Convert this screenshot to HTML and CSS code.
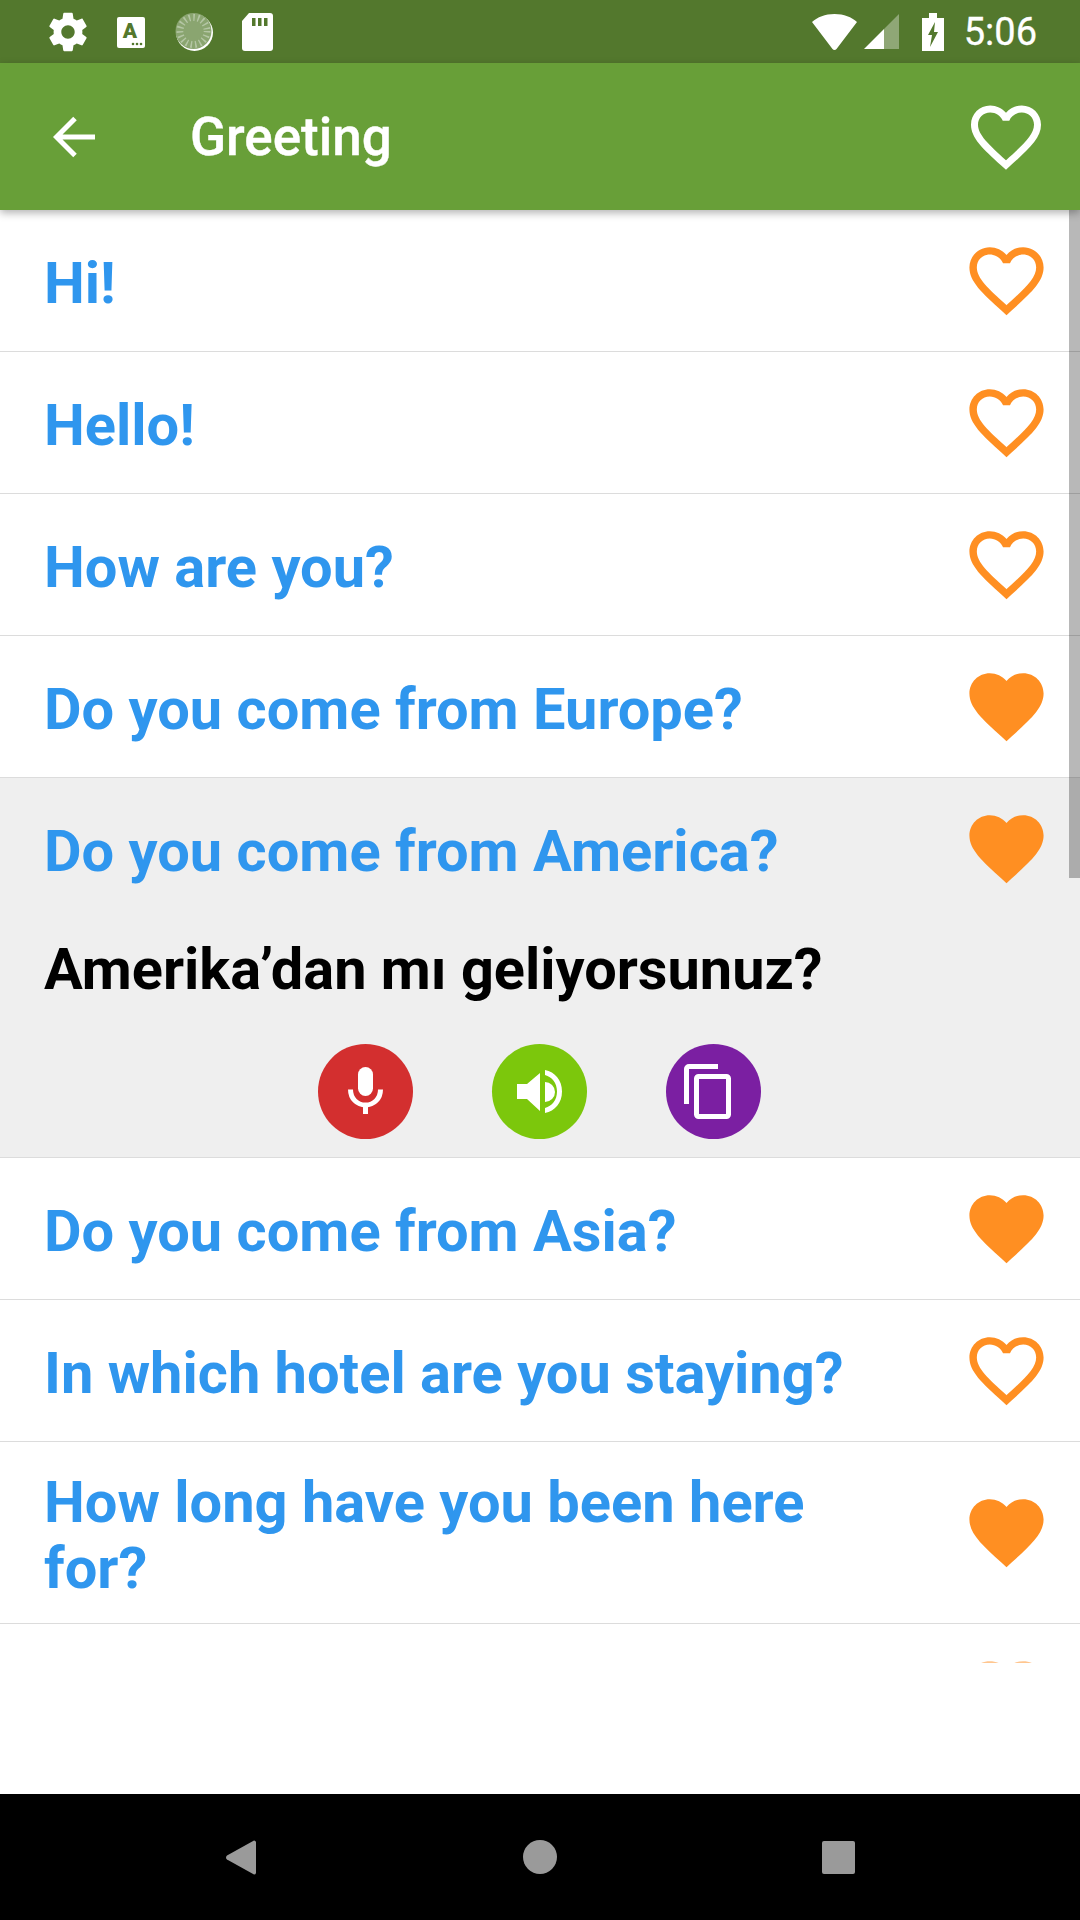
FILE: index.html
```html
<!DOCTYPE html>
<html lang="en">
<head>
    <meta charset="UTF-8">
    <meta name="viewport" content="width=device-width, initial-scale=1.0">
    <title>Greeting</title>
    <link rel="stylesheet" href="styles.css">
</head>
<body>
    <svg class="icon-defs" width="0" height="0">
        <defs>
            <path id="heart-fill" d="M12 21.35l-1.45-1.32C5.4 15.36 2 12.28 2 8.5 2 5.42 4.42 3 7.5 3c1.74 0 3.41.81 4.5 2.09C13.09 3.81 14.76 3 16.5 3 19.58 3 22 5.42 22 8.5c0 3.78-3.4 6.86-8.55 11.54L12 21.35z"/>
            <path id="heart-line" d="M16.5 3c-1.74 0-3.41.81-4.5 2.09C10.91 3.81 9.24 3 7.5 3 4.42 3 2 5.42 2 8.5c0 3.78 3.4 6.86 8.55 11.54L12 21.35l1.45-1.32C18.6 15.36 22 12.28 22 8.5 22 5.42 19.58 3 16.5 3zm-4.4 15.55l-.1.1-.1-.1C7.14 14.24 4 11.39 4 8.5 4 6.5 5.5 5 7.5 5c1.54 0 3.04.99 3.57 2.36h1.87C13.46 5.99 14.96 5 16.5 5c2 0 3.5 1.5 3.5 3.5 0 2.89-3.14 5.74-7.9 10.05z"/>
        </defs>
    </svg>

    <div class="status-bar">
        <div class="status-left">
            <svg class="status-icon" viewBox="0 0 24 24"><path fill="#fff" d="M19.43 12.98c.04-.32.07-.64.07-.98s-.03-.66-.07-.98l2.11-1.65c.19-.15.24-.42.12-.64l-2-3.46c-.12-.22-.39-.3-.61-.22l-2.49 1c-.52-.4-1.08-.73-1.69-.98l-.38-2.65C14.46 2.18 14.25 2 14 2h-4c-.25 0-.46.18-.49.42l-.38 2.65c-.61.25-1.17.59-1.69.98l-2.49-1c-.23-.09-.49 0-.61.22l-2 3.46c-.13.22-.07.49.12.64l2.11 1.65c-.04.32-.07.65-.07.98s.03.66.07.98l-2.11 1.65c-.19.15-.24.42-.12.64l2 3.46c.12.22.39.3.61.22l2.49-1c.52.4 1.08.73 1.69.98l.38 2.65c.03.24.24.42.49.42h4c.25 0 .46-.18.49-.42l.38-2.65c.61-.25 1.17-.59 1.69-.98l2.49 1c.23.09.49 0 .61-.22l2-3.46c.12-.22.07-.49-.12-.64l-2.11-1.65zM12 15.5c-1.93 0-3.5-1.57-3.5-3.5s1.57-3.5 3.5-3.5 3.5 1.57 3.5 3.5-1.57 3.5-3.5 3.5z"/></svg>
            <svg class="status-icon" viewBox="0 0 46 46">
                <rect x="9" y="8" width="28" height="31" rx="2" fill="#fff"/>
                <text x="22" y="29" class="a-glyph">A</text>
                <circle cx="25" cy="35" r="1.3" fill="#53782d"/><circle cx="29" cy="35" r="1.3" fill="#53782d"/><circle cx="33" cy="35" r="1.3" fill="#53782d"/>
            </svg>
            <svg class="status-icon" viewBox="0 0 46 46">
                <circle cx="23.500" cy="23.500" r="18.500" fill="#fff"/>
                <circle cx="22.500" cy="22" r="18" fill="#8aa570"/>
                <circle cx="22.500" cy="22" r="13.500" fill="none" stroke="#b4c6a4" stroke-width="7" stroke-dasharray="1.500 3"/>
                <circle cx="22.500" cy="22" r="10" fill="#8aa570"/>
            </svg>
            <svg class="status-icon" viewBox="0 0 46 46">
                <path fill="#fff" d="M15 4h21a3 3 0 0 1 3 3v32a3 3 0 0 1-3 3H11a3 3 0 0 1-3-3V12z"/>
                <path fill="#53782d" d="M18 9h3.500v8H18zM24 9h3.500v8H24zM30 9h3.500v8H30z"/>
            </svg>
        </div>
        <div class="status-right">
            <svg class="wifi" viewBox="0 0 45 36"><path fill="#fff" d="M22.500 0C13 0 5.500 3 0 8l20.500 27a2.500 2.500 0 0 0 4 0L45 8C39.500 3 32 0 22.500 0z"/></svg>
            <svg class="signal" viewBox="0 0 35 35">
                <path fill="#fff" d="M0 35L20 15V35z"/>
                <path fill="#fff" fill-opacity=".35" d="M20 15L35 0V35H20z"/>
            </svg>
            <svg class="battery" viewBox="0 0 22 38">
                <path fill="#fff" d="M7 0h8v5h7v33H0V5h7z"/>
                <path fill="#53782d" d="M13 9L6 22h4l-2 12 8-15h-4z"/>
            </svg>
            <span class="clock">5:06</span>
        </div>
    </div>

    <header class="toolbar">
        <svg class="back-arrow" viewBox="0 0 42 42"><path fill="none" stroke="#fff" stroke-width="5" d="M42 21H4M22 2.500L3.500 21 22 39.500"/></svg>
        <h1 class="toolbar-title">Greeting</h1>
        <svg class="toolbar-heart" viewBox="0 0 24 24"><use href="#heart-line" fill="#fff"/></svg>
    </header>

    <main class="list">
        <div class="scrollbar"></div>

        <div class="row">
            <div class="phrase">Hi!</div>
            <svg class="heart" viewBox="0 0 24 24"><use href="#heart-line"/></svg>
        </div>
        <div class="row">
            <div class="phrase">Hello!</div>
            <svg class="heart" viewBox="0 0 24 24"><use href="#heart-line"/></svg>
        </div>
        <div class="row">
            <div class="phrase">How are you?</div>
            <svg class="heart" viewBox="0 0 24 24"><use href="#heart-line"/></svg>
        </div>
        <div class="row">
            <div class="phrase">Do you come from Europe?</div>
            <svg class="heart" viewBox="0 0 24 24"><use href="#heart-fill"/></svg>
        </div>

        <div class="expanded">
            <div class="expanded-head">
                <div class="phrase">Do you come from America?</div>
                <svg class="heart" viewBox="0 0 24 24"><use href="#heart-fill"/></svg>
            </div>
            <div class="translation">Amerika’dan mı geliyorsunuz?</div>
            <div class="actions">
                <svg class="action action-mic" viewBox="0 0 95 95">
                    <rect x="40" y="23" width="15" height="29" rx="7.500" fill="#fff"/>
                    <path fill="none" stroke="#fff" stroke-width="5" d="M32.500 45.500c0 9 6.500 15.500 15 15.500s15-6.500 15-15.500"/>
                    <rect x="45" y="60" width="5" height="10" fill="#fff"/>
                </svg>
                <svg class="action action-speaker" viewBox="0 0 95 95">
                    <path fill="#fff" d="M25 40h10l13-11v38L35 55H25z"/>
                    <path fill="#fff" d="M53 38a10 10 0 0 1 0 20z"/>
                    <path fill="#fff" d="M53 26c10 2 17 10 17 21.500S63 67 53 69v-5c7-2 12-8 12-16.500S60 33 53 31z"/>
                </svg>
                <svg class="action action-copy" viewBox="0 0 95 95">
                    <path fill="none" stroke="#fff" stroke-width="5" d="M20.500 60V25a2.500 2.500 0 0 1 2.500-2.500h29"/>
                    <rect x="30.500" y="32.500" width="32" height="40" rx="2" fill="none" stroke="#fff" stroke-width="5"/>
                </svg>
            </div>
        </div>

        <div class="row">
            <div class="phrase">Do you come from Asia?</div>
            <svg class="heart" viewBox="0 0 24 24"><use href="#heart-fill"/></svg>
        </div>
        <div class="row">
            <div class="phrase">In which hotel are you staying?</div>
            <svg class="heart" viewBox="0 0 24 24"><use href="#heart-line"/></svg>
        </div>
        <div class="row row-tall">
            <div class="phrase">How long have you been here for?</div>
            <svg class="heart" viewBox="0 0 24 24"><use href="#heart-fill"/></svg>
        </div>
        <div class="row row-cut">
            <svg class="heart" viewBox="0 0 24 24"><use href="#heart-line"/></svg>
        </div>
    </main>

    <div class="list-rest"></div>

    <nav class="nav-bar">
        <svg class="nav-back" viewBox="0 0 30 35"><path fill="#9a9a9a" d="M28 0.500a2 2 0 0 1 2 1.500v31a2 2 0 0 1-2 1.500L1 19.500a2.500 2.500 0 0 1 0-4z"/></svg>
        <div class="nav-home"></div>
        <div class="nav-recent"></div>
    </nav>
</body>
</html>
```

FILE: styles.css
```css
* {
    box-sizing: border-box;
}
html, body {
    margin: 0;
    padding: 0;
}
body {
    width: 1080px;
    height: 1920px;
    display: flex;
    flex-direction: column;
    font-family: Roboto, "Noto Sans", sans-serif;
    background-color: #fff;
    overflow: hidden;
}
.icon-defs {
    position: absolute;
}

.status-bar {
    height: 63px;
    flex: none;
    display: flex;
    justify-content: space-between;
    align-items: center;
    background-color: #53782d;
    color: #fff;
}
.status-left {
    display: flex;
    gap: 17px;
    padding-left: 45px;
}
.status-icon {
    width: 46px;
    height: 46px;
    display: block;
}
.a-glyph {
    font-family: Roboto, sans-serif;
    font-weight: 900;
    font-size: 21px;
    text-anchor: middle;
    fill: #53782d;
}
.status-right {
    display: flex;
    align-items: center;
    padding-right: 43px;
}
.wifi {
    width: 45px;
    height: 36px;
    margin-right: 7px;
}
.signal {
    width: 35px;
    height: 35px;
    margin-right: 23px;
}
.battery {
    width: 22px;
    height: 38px;
    margin-right: 20px;
}
.clock {
    font-size: 38px;
    line-height: 68px;
    -webkit-text-stroke: 0.3px #fff;
}

.toolbar {
    height: 147px;
    flex: none;
    display: flex;
    align-items: center;
    padding: 0 32px 0 53px;
    background-color: #689f38;
    box-shadow: 0 3px 8px rgba(0, 0, 0, 0.3);
    position: relative;
    z-index: 2;
}
.back-arrow {
    width: 42px;
    height: 42px;
    margin-right: 95px;
}
.toolbar-title {
    margin: 0;
    flex: 1;
    font-size: 53px;
    font-weight: 500;
    line-height: 152px;
    -webkit-text-stroke: 0.4px #fff;
    color: #fff;
}
.toolbar-heart {
    width: 84px;
    height: 84px;
}

.list {
    height: 1453px;
    flex: none;
    overflow: hidden;
    position: relative;
}
.scrollbar {
    position: absolute;
    top: 0;
    right: 0;
    width: 11px;
    height: 668px;
    background-color: rgba(0, 0, 0, 0.28);
    z-index: 1;
}
.row, .expanded-head {
    height: 142px;
    display: flex;
    align-items: center;
    justify-content: space-between;
    padding: 0 29px 0 44px;
}
.row {
    border-bottom: 1px solid #dcdcdc;
}
.expanded-head {
    padding-bottom: 1px;
}
.row-tall {
    height: 182px;
}
.phrase {
    max-width: 820px;
    font-size: 57.8px;
    font-weight: 700;
    line-height: 66px;
    padding-top: 4px;
    color: #2f96ee;
}
.heart {
    width: 89px;
    height: 89px;
    flex: none;
    fill: #ff8f22;
}
.row-cut {
    justify-content: flex-end;
    opacity: 0.5;
}

.expanded {
    height: 380px;
    background-color: #efefef;
    border-bottom: 1px solid #dcdcdc;
}
.translation {
    margin-top: 16px;
    padding-left: 44px;
    font-size: 57.7px;
    font-weight: 700;
    line-height: 66px;
    color: #000;
}
.actions {
    display: flex;
    justify-content: center;
    gap: 79px;
    margin-top: 42px;
    padding-right: 2px;
}
.action {
    width: 95px;
    height: 95px;
    border-radius: 50%;
}
.action-mic {
    background-color: #d32f2f;
}
.action-speaker {
    background-color: #7cc70c;
}
.action-copy {
    background-color: #7b1fa2;
}

.list-rest {
    flex: 1;
    background-color: #fff;
}

.nav-bar {
    height: 126px;
    flex: none;
    display: flex;
    align-items: center;
    justify-content: center;
    background-color: #000;
}
.nav-back {
    width: 30px;
    height: 35px;
    margin-right: 267px;
}
.nav-home {
    width: 34px;
    height: 34px;
    border-radius: 50%;
    background-color: #9a9a9a;
    margin-right: 265px;
}
.nav-recent {
    width: 33px;
    height: 33px;
    border-radius: 2px;
    background-color: #9a9a9a;
}
```
